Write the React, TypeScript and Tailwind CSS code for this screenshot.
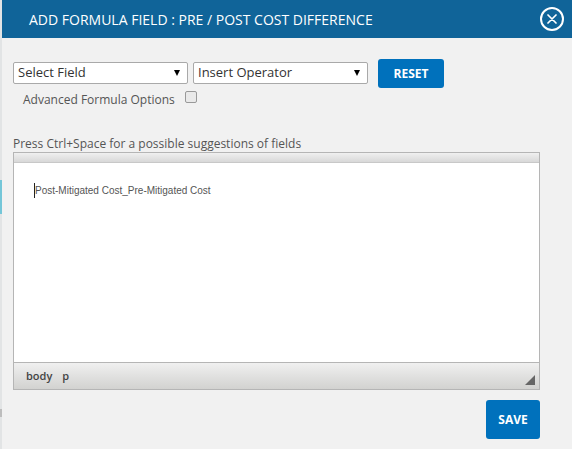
import React from 'react';

const font = { fontFamily: '"Open Sans", sans-serif' };

const FakeSelect: React.FC<{ label: string }> = ({ label }) => (
  <div className="w-[175px] h-[22px] bg-white border border-[#a9a9a9] rounded-[2px] flex items-center justify-between pl-[4px] pr-[7px]">
    <span className="text-[13px] text-[#333]">{label}</span>
    <span className="w-0 h-0 border-l-[3.5px] border-r-[3.5px] border-t-[6px] border-l-transparent border-r-transparent border-t-black" />
  </div>
);

export default function App() {
  return (
    <div style={font} className="w-[572px] h-[449px] flex overflow-hidden bg-[#f1f1f1]">
      {/* page behind the modal */}
      <div className="w-[2px] h-full flex flex-col bg-[#e2e4e5]">
        <div className="h-[180px]" />
        <div className="h-[34px] bg-[#74c6d8]" />
        <div className="h-[195px]" />
        <div className="h-[8px] bg-[#bdbdbd]" />
      </div>

      <div className="flex-1 flex flex-col">
        <header className="h-[38px] bg-[#106499] flex items-center justify-between pl-[27px] pr-[8px]">
          <h2 className="text-[14px] text-white">ADD FORMULA FIELD : PRE / POST COST DIFFERENCE</h2>
          <button className="w-[24px] h-[24px] rounded-full border-2 border-white flex items-center justify-center">
            <svg width="10" height="10" viewBox="0 0 10 10">
              <path d="M1 1L9 9M9 1L1 9" stroke="white" strokeWidth="1.7" strokeLinecap="round" />
            </svg>
          </button>
        </header>

        <div className="pl-[11px] pr-[32px]">
          <div className="flex items-start gap-[5px] pt-[24px]">
            <FakeSelect label="Select Field" />
            <FakeSelect label="Insert Operator" />
            <button className="ml-[5px] -mt-[3px] w-[66px] h-[29px] bg-[#0071bc] rounded-[3px] text-white text-[12px] font-bold">
              RESET
            </button>
          </div>

          <div className="flex items-center mt-[4px] pl-[10px] h-[15px]">
            <span className="text-[12px] text-[#555]">Advanced Formula Options</span>
            <span className="ml-[10px] -mt-[5px] w-[12px] h-[12px] bg-[#e9e9e9] border border-[#999] rounded-[2px]" />
          </div>

          <p className="mt-[28px] text-[12px] leading-[17px] text-[#555]">
            Press Ctrl+Space for a possible suggestions of fields
          </p>

          <div className="h-[238px] flex flex-col border border-[#b5b5b5]">
            <div className="h-[9px] bg-gradient-to-b from-[#f0f0f0] to-[#d8d8d8]" />
            <div className="flex-1 bg-white border-t border-[#c8c8c8] pl-[20px] pt-[20px]">
              <div className="flex items-center h-[15px]">
                <span className="w-px h-[15px] bg-[#222]" />
                <span className="text-[10px] text-[#555]" style={{ fontFamily: '"Liberation Sans", sans-serif' }}>
                  Post-Mitigated Cost_Pre-Mitigated Cost
                </span>
              </div>
            </div>
            <div className="h-[27px] flex items-center justify-between pl-[12px] pr-[4px] border-t border-[#b5b5b5] bg-gradient-to-b from-[#f0f0f0] to-[#d2d2d0]">
              <div className="flex gap-[10px] text-[11px] font-semibold text-[#444]">
                <span>body</span>
                <span>p</span>
              </div>
              <svg width="10" height="10" viewBox="0 0 10 10" className="mt-[7px]">
                <path d="M10 0V10H0Z" fill="#666" />
              </svg>
            </div>
          </div>

          <div className="flex justify-end mt-[10px]">
            <button className="w-[54px] h-[39px] bg-[#0071bc] rounded-[3px] text-white text-[12px] font-bold">
              SAVE
            </button>
          </div>
        </div>
      </div>
    </div>
  );
}
